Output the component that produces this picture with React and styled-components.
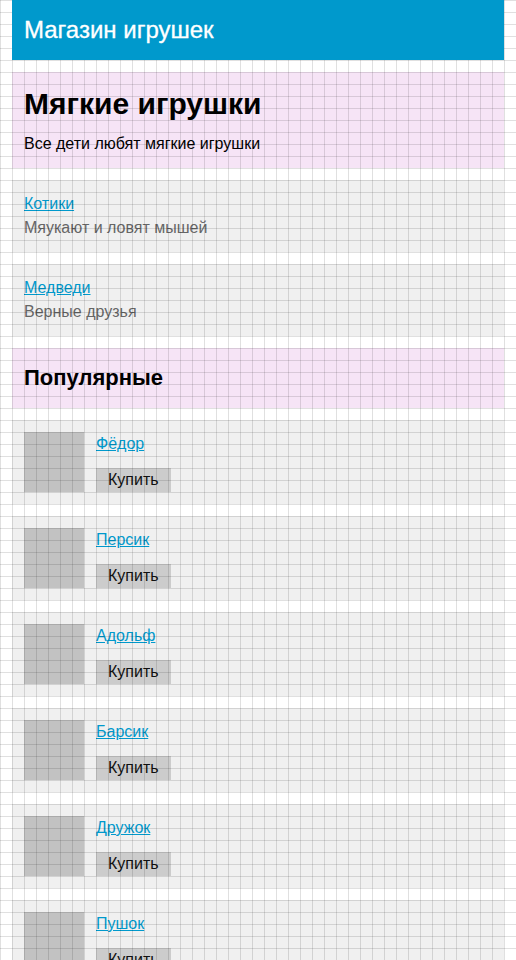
import React from 'react';
import styled, { createGlobalStyle } from 'styled-components';

const GlobalStyle = createGlobalStyle`
  html, body {
    margin: 0;
    padding: 0;
    background: #ffffff;
  }
  body {
    font-family: 'Liberation Sans', Arial, sans-serif;
    font-size: 16px;
    line-height: 24px;
    color: #000000;
  }
`;

// the 12px baseline grid drawn over the page (header stays on top)
const GridOverlay = styled.div`
  position: fixed;
  inset: 0;
  z-index: 1;
  pointer-events: none;
  background-image:
    linear-gradient(to right, rgba(0, 0, 0, 0.12) 1px, transparent 1px),
    linear-gradient(to bottom, rgba(0, 0, 0, 0.12) 1px, transparent 1px);
  background-size: 12px 12px;
`;

const Page = styled.div`
  display: flex;
  flex-direction: column;
  gap: 12px;
  padding: 0 12px;
`;

const Header = styled.header`
  position: relative;
  z-index: 2;
  background-color: #0099cc;
  padding: 12px;
`;

const HeaderTitle = styled.h1`
  margin: 0;
  font-size: 24px;
  line-height: 36px;
  font-weight: normal;
  color: #ffffff;
  -webkit-text-stroke: 0.3px #ffffff;
`;

const Banner = styled.section`
  background-color: #f6e4f6;
  padding: 12px;
`;

const BannerTitle = styled.h2`
  margin: 0 0 ${({ small }) => (small ? '0' : '8px')};
  font-size: ${({ small }) => (small ? '22px' : '30px')};
  line-height: ${({ small }) => (small ? '36px' : '40px')};
  font-weight: bold;
`;

const BannerText = styled.p`
  margin: 0;
`;

const Card = styled.div`
  background-color: #f0f0f0;
  padding: 12px;
  display: flex;
  gap: 12px;
`;

const CardBody = styled.div`
  display: flex;
  flex-direction: column;
  align-items: flex-start;
  gap: ${({ spaced }) => (spaced ? '12px' : '0')};
`;

const Link = styled.a`
  color: #0099cc;
  text-decoration: underline;
`;

const Description = styled.p`
  margin: 0;
  color: #666666;
`;

const Thumb = styled.div`
  width: 60px;
  height: 60px;
  flex-shrink: 0;
  background-color: #c2c2c2;
`;

const BuyButton = styled.button`
  border: 0;
  margin: 0;
  height: 24px;
  padding: 0 12px;
  background-color: #cccccc;
  color: #111111;
  font-family: 'Liberation Sans', Arial, sans-serif;
  font-size: 16px;
  line-height: 24px;
  cursor: pointer;
`;

const categories = [
  { name: 'Котики', text: 'Мяукают и ловят мышей' },
  { name: 'Медведи', text: 'Верные друзья' },
];

const products = ['Фёдор', 'Персик', 'Адольф', 'Барсик', 'Дружок', 'Пушок'];

const App = () => (
  <>
    <GlobalStyle />
    <GridOverlay />
    <Page>
      <Header>
        <HeaderTitle>Магазин игрушек</HeaderTitle>
      </Header>
      <Banner>
        <BannerTitle>Мягкие игрушки</BannerTitle>
        <BannerText>Все дети любят мягкие игрушки</BannerText>
      </Banner>
      {categories.map(c => (
        <Card key={c.name}>
          <CardBody>
            <Link href="#">{c.name}</Link>
            <Description>{c.text}</Description>
          </CardBody>
        </Card>
      ))}
      <Banner>
        <BannerTitle small>Популярные</BannerTitle>
      </Banner>
      {products.map(p => (
        <Card key={p}>
          <Thumb />
          <CardBody spaced>
            <Link href="#">{p}</Link>
            <BuyButton>Купить</BuyButton>
          </CardBody>
        </Card>
      ))}
    </Page>
  </>
);

export default App;
